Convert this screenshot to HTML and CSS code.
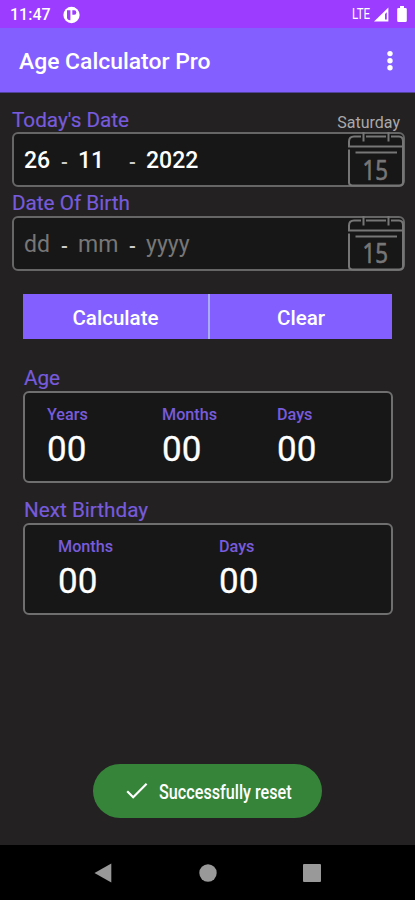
FILE: index.html
```html
<!DOCTYPE html>
<html lang="en">
<head>
<meta charset="utf-8">
<meta name="viewport" content="width=device-width, initial-scale=1">
<title>Age Calculator Pro</title>
<link rel="stylesheet" href="styles.css">
</head>
<body>
<div class="screen">
  <header class="status">
    <span class="time">11:47</span>
    <svg class="notice" width="17" height="18" viewBox="0 0 17 18"><ellipse cx="8.5" cy="9" rx="8.1" ry="8.3" fill="#fff"/><path d="M4 4.2H7.4V14.2Q4 14 4 11.2Z" fill="#9b3cff"/><path d="M9.3 4.2H11.4A1.8 2.2 0 0 1 11.4 8.8H9.3Z" fill="#9b3cff"/></svg>
    <span class="lte">LTE</span>
    <svg class="signal" width="15" height="15" viewBox="0 0 15 15"><path d="M0 14.5 14.4 .5V14.5Z" fill="#fff"/><path d="M11 7 12.8 5.2V12.6H11Z" fill="#9b3cff"/></svg>
    <svg class="battery" width="10" height="17" viewBox="0 0 10 17"><path d="M3 0H7V2H8.5Q9.8 2 9.8 3.3V14.7Q9.8 16 8.5 16H1.5Q.2 16 .2 14.7V3.3Q.2 2 1.5 2H3Z" fill="#fff"/></svg>
  </header>
  <div class="appbar">
    <h1>Age Calculator Pro</h1>
    <svg class="more" width="6" height="22" viewBox="0 0 6 22"><g fill="#fff"><circle cx="3" cy="3.6" r="2.7"/><circle cx="3" cy="10.7" r="2.7"/><circle cx="3" cy="17.7" r="2.7"/></g></svg>
  </div>
  <main>
    <section class="dates">
      <div class="label-row"><h2>Today's Date</h2><span class="weekday">Saturday</span></div>
      <div class="field">
        <span class="day">26</span><span class="dash">-</span><span class="month">11</span><span class="dash">-</span><span class="year">2022</span>
        <svg class="calendar" width="58" height="57" viewBox="0 0 58 57"><g fill="none" stroke="#777677" stroke-width="2"><path d="M14 5.5H7Q2 5.5 2 10.5V15.5H56V10.5Q56 5.5 52 5.5H44M19 5.5H39M16.5 1V10.5M41.5 1V10.5M2 18.5V51.5Q2 54.5 5.5 54.5H52.5Q56 54.5 56 51.5V15.5M8.5 21.5H50"/></g><text x="15.5" y="48.5" textLength="25.5" lengthAdjust="spacingAndGlyphs">15</text></svg>
      </div>
      <div class="label-row second"><h2>Date Of Birth</h2></div>
      <div class="field hint">
        <span class="day">dd</span><span class="dash">-</span><span class="month">mm</span><span class="dash">-</span><span class="year">yyyy</span>
        <svg class="calendar" width="58" height="57" viewBox="0 0 58 57"><g fill="none" stroke="#777677" stroke-width="2"><path d="M14 5.5H7Q2 5.5 2 10.5V15.5H56V10.5Q56 5.5 52 5.5H44M19 5.5H39M16.5 1V10.5M41.5 1V10.5M2 18.5V51.5Q2 54.5 5.5 54.5H52.5Q56 54.5 56 51.5V15.5M8.5 21.5H50"/></g><text x="15.5" y="48" textLength="25.5" lengthAdjust="spacingAndGlyphs">15</text></svg>
      </div>
    </section>
    <div class="actions"><button>Calculate</button><button>Clear</button></div>
    <section class="result age">
      <h2>Age</h2>
      <div class="panel three">
        <div><h3>Years</h3><p>00</p></div>
        <div><h3>Months</h3><p>00</p></div>
        <div><h3>Days</h3><p>00</p></div>
      </div>
    </section>
    <section class="result">
      <h2>Next Birthday</h2>
      <div class="panel two">
        <div><h3>Months</h3><p>00</p></div>
        <div><h3>Days</h3><p>00</p></div>
      </div>
    </section>
    <div class="toast">
      <svg width="22" height="18" viewBox="0 0 22 18"><path d="M1.2 9.2 7.2 15.2 20.6 1.8" fill="none" stroke="#fff" stroke-width="2.2"/></svg>
      <span>Successfully reset</span>
    </div>
  </main>
  <nav>
    <svg width="18" height="20" viewBox="0 0 18 20"><path d="M.5 10 17.3 .5V19.5Z" fill="#999"/></svg>
    <svg width="18" height="18" viewBox="0 0 18 18"><circle cx="9" cy="9" r="8.7" fill="#999"/></svg>
    <svg width="18" height="18" viewBox="0 0 18 18"><rect width="18" height="18" rx="1" fill="#999"/></svg>
  </nav>
</div>
</body>
</html>
```
FILE: styles.css
```css
* { box-sizing: border-box; }
body, h1, h2, h3, p { margin: 0; }
body { font-family: Roboto, sans-serif; background: #232122; }
.screen { width: 415px; height: 900px; display: flex; flex-direction: column; overflow: hidden; color: #fff; }

.status { height: 28px; flex: none; display: flex; align-items: center; background: #9b3cff; padding: 1px 8px 0 10px; }
.time { width: 53px; font-size: 16px; font-weight: 500; line-height: 30px; }
.lte { margin-left: auto; width: 22px; font-size: 14.5px; line-height: 30px; transform: scaleX(.8); transform-origin: left; white-space: nowrap; }
.signal { margin-right: 8px; }

.appbar { height: 65px; flex: none; display: flex; align-items: center; justify-content: space-between; background: #835fff; border-bottom: 1px solid #51439a; padding: 3px 22px 0 19px; }
.appbar h1 { font-size: 22.9px; font-weight: 500; line-height: 32px; white-space: nowrap; }
.more { margin-bottom: 2px; }

main { flex: 1; display: flex; flex-direction: column; padding-top: 13px; }
h2 { color: #775bdc; font-size: 20.7px; font-weight: 400; line-height: 28px; white-space: nowrap; -webkit-text-stroke: .2px #775bdc; }
.dates { padding: 0 10px 0 12px; }
.label-row { height: 26px; display: flex; justify-content: space-between; }
.label-row.second { height: 29px; padding-top: 2px; }
.weekday { font-size: 16px; line-height: 33px; color: #aaa9aa; margin-right: 5px; }
.field { height: 55px; width: 393px; display: flex; align-items: center; background: #171717; border: 2px solid #676667; border-radius: 6px; padding: 0 0 0 10px; font-size: 23px; line-height: 30px; }
.field .day { width: 37px; font-weight: 500; padding-top: 3px; }
.field .month { width: 51px; font-weight: 500; padding-top: 3px; }
.field .year { width: 100px; font-weight: 500; padding-top: 3px; }
.field .dash { width: 17px; font-size: 20px; font-weight: 500; color: #ccc; padding-top: 4px; }
.field.hint .day, .field.hint .month, .field.hint .year { font-weight: 400; color: #777; }
.calendar { margin: 0 -2px 0 auto; flex: none; }
.calendar text { font: 400 27px "Open Sans", sans-serif; fill: #777677; stroke: #777677; stroke-width: .7px; }

.actions { display: grid; grid-template-columns: 185px 184px; height: 45px; width: 369px; margin: 23px 0 0 23px; }
.actions button { border: 0; padding: 2px 0 0; background: #835fff; color: #fff; font: 500 20.6px Roboto, sans-serif; }
.actions button + button { border-left: 2px solid #a7acff; }

.result { padding-left: 23px; margin-top: 13px; }
.result.age { margin-top: 25px; }
.result h2 { height: 27px; padding-left: 1px; }
.panel { width: 370px; height: 92px; display: grid; background: #171717; border: 2px solid #706f70; border-radius: 6px; padding-top: 11px; }
.three { grid-template-columns: 115px 115px 115px; padding-left: 22px; }
.two { grid-template-columns: 161px 161px; padding-left: 33px; }
h3 { font-size: 16.2px; font-weight: 500; line-height: 22px; color: #775bdc; }
.panel p { font-size: 35px; font-weight: 400; line-height: 44px; margin-top: 2px; -webkit-text-stroke: .3px #fff; }

.toast { width: 229px; height: 54px; margin: auto 0 27px 93px; display: flex; align-items: center; background: #36843a; border-radius: 27px; padding-left: 33px; }
.toast svg { flex: none; }
.toast span { margin: 1px 0 0 11px; font-size: 20px; font-weight: 500; transform: scaleX(.81); transform-origin: left; white-space: nowrap; }

nav { height: 55px; flex: none; display: flex; align-items: center; justify-content: space-between; background: #000; padding: 0 94px; }
```
